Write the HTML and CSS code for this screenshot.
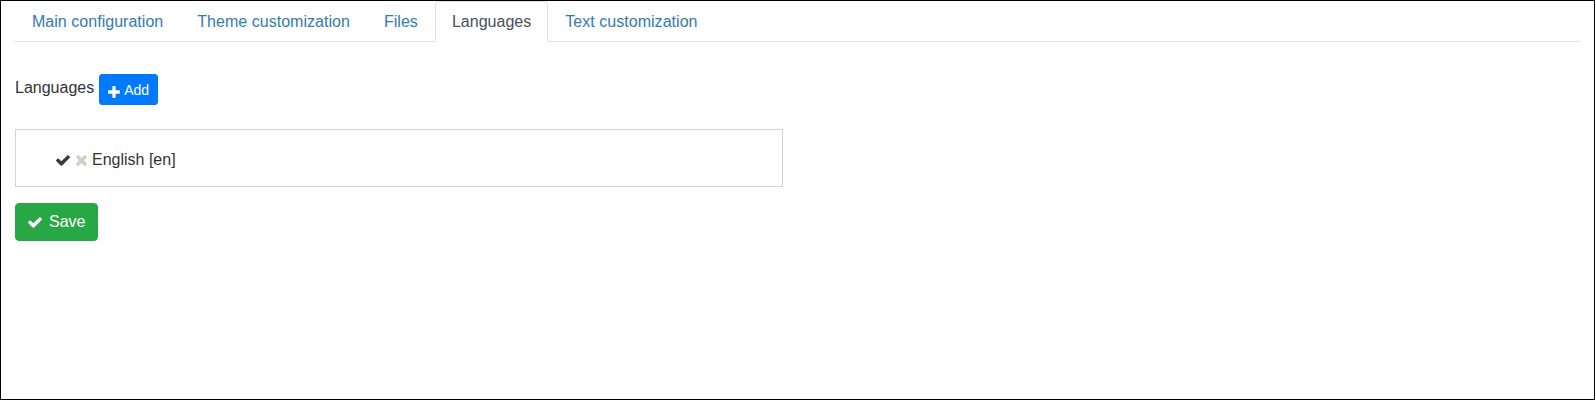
FILE: index.html
```html
<!DOCTYPE html>
<html>
<head>
<meta charset="utf-8">
<link rel="stylesheet" href="styles.css">
</head>
<body>
<div class="page">
  <ul class="tabs">
    <li class="tab"><a class="tab-link">Main configuration</a></li>
    <li class="tab"><a class="tab-link">Theme customization</a></li>
    <li class="tab"><a class="tab-link">Files</a></li>
    <li class="tab"><a class="tab-link active">Languages</a></li>
    <li class="tab"><a class="tab-link">Text customization</a></li>
  </ul>
  <div class="lang-head">
    <span class="lang-label">Languages</span>
    <button class="btn btn-add"><svg class="ico-plus" viewBox="0 192 1408 1408"><path d="M1408 800v192q0 40-28 68t-68 28h-416v416q0 40-28 68t-68 28h-192q-40 0-68-28t-28-68v-416h-416q-40 0-68-28t-28-68v-192q0-40 28-68t68-28h416v-416q0-40 28-68t68-28h192q40 0 68 28t28 68v416h416q40 0 68 28t28 68z"/></svg>Add</button>
  </div>
  <div class="lang-box">
    <ul class="lang-list">
      <li class="lang-item">
        <svg class="ico-check dark" viewBox="121 334 1550 1188"><path d="M1671 566q0 40-28 68l-724 724-136 136q-28 28-68 28t-68-28l-136-136-362-362q-28-28-28-68t28-68l136-136q28-28 68-28t68 28l294 295 656-657q28-28 68-28t68 28l136 136q28 28 28 68z"/></svg>
        <svg class="ico-times" viewBox="110 366 1188 1188"><path d="M1298 1322q0 40-28 68l-136 136q-28 28-68 28t-68-28l-294-294-294 294q-28 28-68 28t-68-28l-136-136q-28-28-28-68t28-68l294-294-294-294q-28-28-28-68t28-68l136-136q28-28 68-28t68 28l294 294 294-294q28-28 68-28t68 28l136 136q28 28 28 68t-28 68l-294 294 294 294q28 28 28 68z"/></svg>
        <span class="lang-name">English [en]</span>
      </li>
    </ul>
  </div>
  <button class="btn btn-save"><svg class="ico-check" viewBox="121 334 1550 1188"><path d="M1671 566q0 40-28 68l-724 724-136 136q-28 28-68 28t-68-28l-136-136-362-362q-28-28-28-68t28-68l136-136q28-28 68-28t68 28l294 295 656-657q28-28 68-28t68 28l136 136q28 28 28 68z"/></svg>Save</button>
</div>
</body>
</html>
```
FILE: styles.css
```css
* { box-sizing: border-box; }
html, body { margin: 0; padding: 0; height: 100%; }
body {
  font-family: "Liberation Sans", Arial, sans-serif;
  font-size: 16px;
  line-height: 1.5;
  color: #333;
  background: #fff;
}
.page {
  height: 100%;
  border: 1px solid #000;
  padding: 0 13px 0 14px;
}
.tabs {
  list-style: none;
  margin: 0;
  padding: 0;
  display: flex;
  border-bottom: 1px solid #dee2e6;
}
.tab { margin-bottom: -1px; }
.tab-link {
  display: block;
  padding: 8px 16px 7px;
  border: 1px solid transparent;
  border-top-left-radius: 4px;
  border-top-right-radius: 4px;
  color: #337ab7;
  text-decoration: none;
  letter-spacing: 0.03px;
  cursor: pointer;
}
.tab-link.active {
  color: #495057;
  background: #fff;
  border-color: #dee2e6 #dee2e6 #fff;
}
.lang-head {
  display: flex;
  align-items: flex-start;
  gap: 5px;
  margin-top: 32px;
}
.lang-label { margin-top: 2px; }
.btn {
  display: inline-flex;
  align-items: center;
  font-family: "Liberation Sans", Arial, sans-serif;
  color: #fff;
  border: 1px solid transparent;
  cursor: pointer;
}
.btn-add {
  align-items: flex-start;
  background: #007bff;
  border-color: #007bff;
  font-size: 14px;
  line-height: 21px;
  padding: 5px 8px 3px;
  border-radius: 3px;
}
.ico-plus { width: 12px; height: 12px; fill: #fff; margin: 6px 4px 0 0; }
.lang-box {
  margin-top: 24px;
  width: 768px;
  border: 1px solid #ced4da;
}
.lang-list {
  list-style: none;
  margin: 0;
  padding: 18px 0 14px 40px;
}
.lang-item {
  display: flex;
  align-items: center;
  height: 24px;
}
.ico-check { width: 14px; height: 11px; fill: #fff; }
.ico-check.dark { fill: #343a40; }
.ico-times { width: 11px; height: 11px; fill: #d0d0d0; margin-left: 6px; }
.lang-name { margin-left: 5px; }
.btn-save {
  margin-top: 16px;
  background: #28a745;
  border-color: #28a745;
  font-size: 16px;
  line-height: 24px;
  padding: 6px 12px;
  border-radius: 4px;
}
.btn-save .ico-check { margin-right: 7px; }
```
